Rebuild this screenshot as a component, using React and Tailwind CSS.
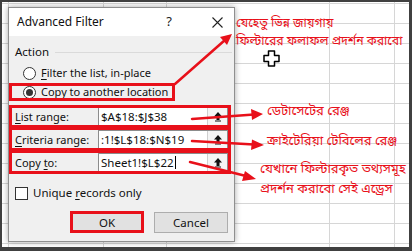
import React from "react";

const ui = "font-['Noto_Sans','Open_Sans',sans-serif]";
const bn = "font-['Noto_Sans_Bengali','Noto_Serif_Bengali','Lohit_Bengali','Vrinda',sans-serif]";

function Grid() {
  const rows = Array.from({ length: 13 });
  return (
    <>
      <div className="absolute inset-0 flex flex-col pt-[3px]">
        {rows.map((_, i) => (
          <div key={i} className="h-[20px] shrink-0 border-t border-[#d6d6d6]" />
        ))}
      </div>
      <div className="absolute inset-0 flex">
        <div className="w-[9px] shrink-0 border-r border-[#d6d6d6]" />
        <div className="w-[95px] shrink-0 border-r border-[#d6d6d6]" />
        <div className="w-[63px] shrink-0 border-r border-[#d6d6d6]" />
        <div className="w-[163px] shrink-0 border-r border-[#d6d6d6]" />
        <div className="w-[65px] shrink-0 border-r border-[#d6d6d6]" />
      </div>
    </>
  );
}

function Radio({ checked }) {
  return (
    <span className="w-[13px] h-[13px] rounded-full border border-[#333] bg-white flex items-center justify-center shrink-0">
      {checked && <span className="w-[7px] h-[7px] rounded-full bg-[#333]" />}
    </span>
  );
}

function UpIcon() {
  return (
    <svg width="10" height="11" viewBox="0 0 10 11">
      <path d="M5 1 L9 5.5 H6.5 V9 H3.5 V5.5 H1 Z" fill="#111" />
      <rect x="2" y="9.5" width="6" height="1" fill="#111" />
    </svg>
  );
}

function RefRow({ label, value, caret }) {
  return (
    <div className="h-[19px] flex items-center">
      <div className="w-[83px] text-[11px] text-[#111] leading-none">{label}</div>
      <div className="flex-1 h-[19px] flex bg-white border border-[#8c8c8c]">
        <div className="flex-1 flex items-center pl-[2px] text-[11.5px] text-[#111] leading-none">
          {value}
          {caret && <span className="w-px h-[13px] bg-black ml-px" />}
        </div>
        <div className="w-[20px] flex items-center justify-center bg-[#f5f5f5] border-l border-[#cfcfcf]">
          <UpIcon />
        </div>
      </div>
    </div>
  );
}

function Dialog() {
  return (
    <div className={`absolute left-[8px] top-[7px] w-[227px] border border-[#8f8f8f] shadow-[0_0_6px_rgba(0,0,0,0.35)] ${ui}`}>
      <div className="h-[28px] bg-white flex items-center pl-[8px] pr-[11px]">
        <span className="flex-1 text-[12px] text-[#111]">Advanced Filter</span>
        <span className="text-[13px] text-[#222] mr-[40px]">?</span>
        <svg width="11" height="11" viewBox="0 0 11 11">
          <path d="M0.5 0.5 L10.5 10.5 M10.5 0.5 L0.5 10.5" stroke="#222" strokeWidth="1.1" />
        </svg>
      </div>
      <div className="bg-[#f0f0f0] pt-[8px] pb-[8px] px-[6px] flex flex-col">
        <div className="h-[16px] flex items-center gap-[6px]">
          <span className="text-[11.5px] text-[#111]">Action</span>
          <span className="flex-1 h-px bg-[#dadada] mr-[-4px]" />
        </div>
        <div className="h-[18px] mt-[4px] flex items-center gap-[5px] pl-[8px]">
          <Radio />
          <span className="text-[11px] text-[#111]">
            <u className="underline-offset-2">F</u>ilter the list, in-place
          </span>
        </div>
        <div className="h-[18px] mt-[1px] flex items-center gap-[5px] pl-[8px]">
          <Radio checked />
          <span className="text-[11px] text-[#111]">
            C<u className="underline-offset-2">o</u>py to another location
          </span>
        </div>
        <div className="mt-[6px] flex flex-col gap-[4px]">
          <RefRow label={<><u className="underline-offset-2">L</u>ist range:</>} value="$A$18:$J$38" />
          <RefRow label={<><u className="underline-offset-2">C</u>riteria range:</>} value=":1!$L$18:$N$19" />
          <RefRow label={<>Copy <u className="underline-offset-2">t</u>o:</>} value="Sheet1!$L$22" caret />
        </div>
        <div className="h-[16px] mt-[13px] flex items-center gap-[5px]">
          <span className="w-[13px] h-[13px] border border-[#333] bg-white" />
          <span className="text-[11.5px] text-[#111]">
            Unique <u className="underline-offset-2">r</u>ecords only
          </span>
        </div>
        <div className="mt-[11px] flex justify-end gap-[10px]">
          <button className="w-[74px] h-[21px] bg-[#e1e1e1] border border-[#adadad] text-[11.5px] text-[#111]">OK</button>
          <button className="w-[74px] h-[21px] bg-[#e1e1e1] border border-[#adadad] text-[11.5px] text-[#111]">Cancel</button>
        </div>
      </div>
    </div>
  );
}

function Marks() {
  return (
    <>
      <div className="absolute left-[9px] top-[83px] w-[166px] h-[18px] border-[3px] border-[#e8101a]" />
      <div className="absolute left-[9px] top-[105px] w-[222px] h-[23px] border-[3px] border-[#e8101a]" />
      <div className="absolute left-[9px] top-[127px] w-[222px] h-[24px] border-[3px] border-[#e8101a]" />
      <div className="absolute left-[9px] top-[150px] w-[222px] h-[24px] border-[3px] border-[#e8101a]" />
      <div className="absolute left-[70px] top-[211px] w-[74px] h-[22px] border-[3px] border-[#e8101a]" />
      <svg className="absolute left-0 top-0" width="412" height="251" viewBox="0 0 412 251">
        <g stroke="#e8101a" strokeWidth="2.5" fill="none" strokeLinecap="round">
          <line x1="175" y1="84" x2="225" y2="40" />
          <line x1="192" y1="119" x2="254" y2="114.5" />
          <line x1="192" y1="141" x2="254" y2="144.5" />
          <line x1="190" y1="162" x2="246" y2="176" />
        </g>
        <g fill="#e8101a">
          <polygon points="232,34 220,37 227,45" />
          <polygon points="263,114 251,109 252,120" />
          <polygon points="264,145 252,139.5 251,150" />
          <polygon points="256,179 245,171 242,181" />
        </g>
      </svg>
      <div className={`absolute left-[236px] top-[15px] text-[12.3px] leading-[18px] text-[#e8101a] whitespace-nowrap ${bn}`}>
        <div>যেহেতু ভিন্ন জায়গায়</div>
        <div>ফিল্টারের ফলাফল প্রদর্শন করাবো</div>
      </div>
      <div className={`absolute left-[267px] top-[103px] text-[13px] leading-[18px] text-[#e8101a] whitespace-nowrap ${bn}`}>ডেটাসেটের রেঞ্জ</div>
      <div className={`absolute left-[267px] top-[133px] text-[13px] leading-[18px] text-[#e8101a] whitespace-nowrap ${bn}`}>ক্রাইটেরিয়া টেবিলের রেঞ্জ</div>
      <div className={`absolute left-[260px] top-[160px] text-[13px] leading-[20px] text-[#e8101a] whitespace-nowrap ${bn}`}>
        <div>যেখানে ফিল্টারকৃত তথ্যসমূহ</div>
        <div>প্রদর্শন করাবো সেই এড্রেস</div>
      </div>
      <svg className="absolute left-[263px] top-[50px]" width="17" height="17" viewBox="0 0 17 17">
        <path d="M5.5 1 H11.5 V5.5 H16 V11.5 H11.5 V16 H5.5 V11.5 H1 V5.5 H5.5 Z" fill="#fff" stroke="#000" strokeWidth="1.5" strokeLinejoin="round" />
      </svg>
    </>
  );
}

export default function App() {
  return (
    <div className="relative w-[412px] h-[251px] bg-white overflow-hidden">
      <Grid />
      <Dialog />
      <Marks />
      <div className="absolute inset-0 border-t-2 border-l-2 border-r-[3px] border-b-[4px] border-[#404040] pointer-events-none" />
    </div>
  );
}
